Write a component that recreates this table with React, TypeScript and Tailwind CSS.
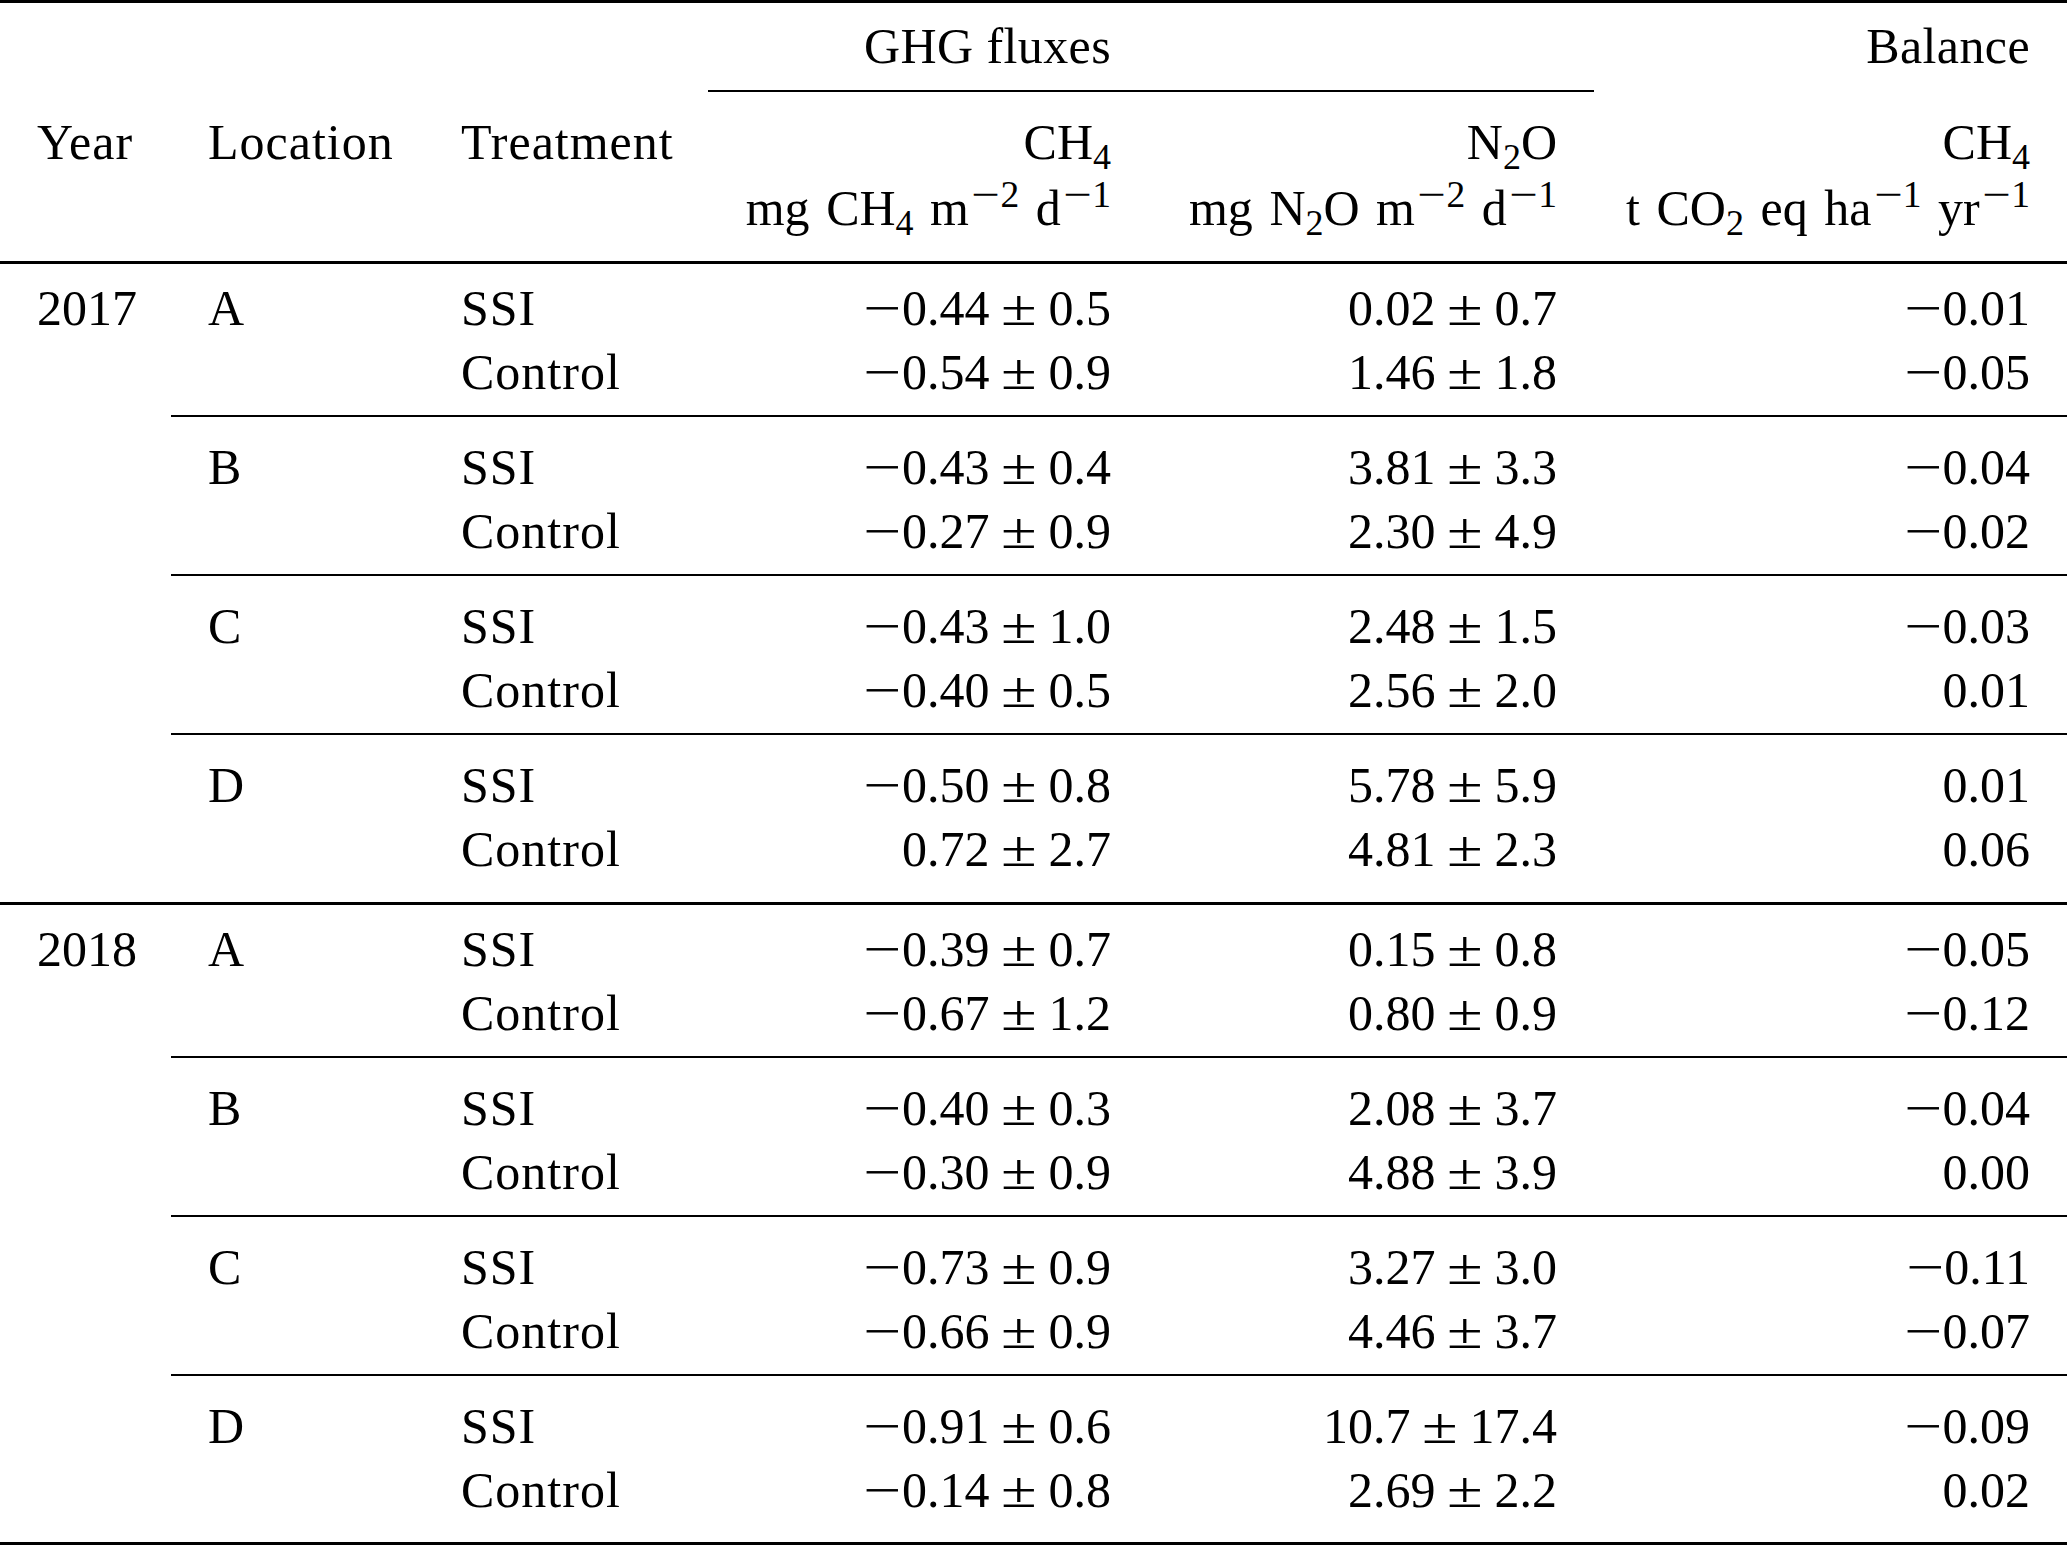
import React from "react";

type Row = { t: string; ch4: [string, string]; n2o: [string, string]; bal: string };
type Group = { loc: string; rows: Row[] };
type Year = { year: string; groups: Group[] };

const data: Year[] = [
  {
    year: "2017",
    groups: [
      {
        loc: "A",
        rows: [
          { t: "SSI", ch4: ["-0.44", "0.5"], n2o: ["0.02", "0.7"], bal: "-0.01" },
          { t: "Control", ch4: ["-0.54", "0.9"], n2o: ["1.46", "1.8"], bal: "-0.05" },
        ],
      },
      {
        loc: "B",
        rows: [
          { t: "SSI", ch4: ["-0.43", "0.4"], n2o: ["3.81", "3.3"], bal: "-0.04" },
          { t: "Control", ch4: ["-0.27", "0.9"], n2o: ["2.30", "4.9"], bal: "-0.02" },
        ],
      },
      {
        loc: "C",
        rows: [
          { t: "SSI", ch4: ["-0.43", "1.0"], n2o: ["2.48", "1.5"], bal: "-0.03" },
          { t: "Control", ch4: ["-0.40", "0.5"], n2o: ["2.56", "2.0"], bal: "0.01" },
        ],
      },
      {
        loc: "D",
        rows: [
          { t: "SSI", ch4: ["-0.50", "0.8"], n2o: ["5.78", "5.9"], bal: "0.01" },
          { t: "Control", ch4: ["0.72", "2.7"], n2o: ["4.81", "2.3"], bal: "0.06" },
        ],
      },
    ],
  },
  {
    year: "2018",
    groups: [
      {
        loc: "A",
        rows: [
          { t: "SSI", ch4: ["-0.39", "0.7"], n2o: ["0.15", "0.8"], bal: "-0.05" },
          { t: "Control", ch4: ["-0.67", "1.2"], n2o: ["0.80", "0.9"], bal: "-0.12" },
        ],
      },
      {
        loc: "B",
        rows: [
          { t: "SSI", ch4: ["-0.40", "0.3"], n2o: ["2.08", "3.7"], bal: "-0.04" },
          { t: "Control", ch4: ["-0.30", "0.9"], n2o: ["4.88", "3.9"], bal: "0.00" },
        ],
      },
      {
        loc: "C",
        rows: [
          { t: "SSI", ch4: ["-0.73", "0.9"], n2o: ["3.27", "3.0"], bal: "-0.11" },
          { t: "Control", ch4: ["-0.66", "0.9"], n2o: ["4.46", "3.7"], bal: "-0.07" },
        ],
      },
      {
        loc: "D",
        rows: [
          { t: "SSI", ch4: ["-0.91", "0.6"], n2o: ["10.7", "17.4"], bal: "-0.09" },
          { t: "Control", ch4: ["-0.14", "0.8"], n2o: ["2.69", "2.2"], bal: "0.02" },
        ],
      },
    ],
  },
];

// math-style minus, wider than the text one
const Minus = () => (
  <span className="inline-block w-[0.78em] text-center">
    <span className="inline-block scale-x-[1.35]">−</span>
  </span>
);

const Num = ({ v }: { v: string }) =>
  v.startsWith("-") ? (
    <>
      <Minus />
      {v.slice(1)}
    </>
  ) : (
    <>{v}</>
  );

const PM = ({ v }: { v: [string, string] }) => (
  <>
    <Num v={v[0]} />
    <span className="mx-[0.2em] inline-block w-[0.78em] text-center">
      <span className="inline-block scale-x-[1.3]">±</span>
    </span>
    {v[1]}
  </>
);

const Sub = ({ children }: { children: React.ReactNode }) => (
  <sub className="bottom-[-0.28em] text-[72%]">{children}</sub>
);
const SupNeg = ({ n }: { n: string }) => (
  <sup className="top-[-0.48em] ml-[0.06em] text-[75%]">
    <Minus />
    {n}
  </sup>
);
// inter-word gap in the unit lines
const Gap = () => <span className="inline-block w-[0.33em]" />;

const GRID6 = "grid grid-cols-[171px_253px_284px_440px_446px_473px]";
const GRID5 = "grid grid-cols-[253px_284px_440px_446px_473px]";

const Header = () => (
  <div className="border-t-[3px] border-b-[3px] border-black">
    <div className={`${GRID6} pt-[11px] leading-[64px] tracking-[0.008em]`}>
      <div className="col-start-4 pr-[37px] text-right">GHG fluxes</div>
      <div className="col-start-6 pr-[37px] text-right">Balance</div>
    </div>
    <div className={`${GRID6} mt-[12px]`}>
      <div className="col-span-2 col-start-4 border-t-2 border-black" />
    </div>
    <div className={`${GRID6} pt-[18px] pb-[21px] leading-[64px]`}>
      <div className="pl-[37px] tracking-[0.02em]">Year</div>
      <div className="pl-[37px] tracking-[0.02em]">Location</div>
      <div className="pl-[37px] tracking-[0.02em]">Treatment</div>
      <div className="pr-[37px] text-right">
        <div>
          CH<Sub>4</Sub>
        </div>
        <div className="mt-[2px] whitespace-nowrap">
          mg<Gap />CH<Sub>4</Sub>
          <Gap />m<SupNeg n="2" />
          <Gap />d<SupNeg n="1" />
        </div>
      </div>
      <div className="pr-[37px] text-right">
        <div>
          N<Sub>2</Sub>O
        </div>
        <div className="mt-[2px] whitespace-nowrap">
          mg<Gap />N<Sub>2</Sub>O<Gap />m<SupNeg n="2" />
          <Gap />d<SupNeg n="1" />
        </div>
      </div>
      <div className="pr-[37px] text-right">
        <div>
          CH<Sub>4</Sub>
        </div>
        <div className="mt-[2px] whitespace-nowrap">
          t<Gap />CO<Sub>2</Sub>
          <Gap />eq<Gap />ha<SupNeg n="1" />
          <Gap />yr<SupNeg n="1" />
        </div>
      </div>
    </div>
  </div>
);

const YearBlock = ({ y, last }: { y: Year; last: boolean }) => (
  <div className={last ? "flex" : "flex border-b-[3px] border-black"}>
    <div className="w-[171px] pl-[37px] pt-[12px] leading-[64px]">{y.year}</div>
    <div className="flex flex-1 flex-col">
      {y.groups.map((g, i) => {
        const first = i === 0;
        const end = i === y.groups.length - 1;
        return (
          <div
            key={g.loc}
            className={`${GRID5} leading-[64px] ${first ? "pt-[12px]" : "border-t-2 border-black pt-[18px]"} ${
              end ? (last ? "pb-[20px]" : "pb-[21px]") : "pb-[11px]"
            }`}
          >
            {g.rows.map((r, j) => (
              <React.Fragment key={r.t}>
                <div className="pl-[37px]">{j === 0 ? g.loc : ""}</div>
                <div className="pl-[37px] tracking-[0.02em]">{r.t}</div>
                <div className="whitespace-nowrap pr-[37px] text-right">
                  <PM v={r.ch4} />
                </div>
                <div className="whitespace-nowrap pr-[37px] text-right">
                  <PM v={r.n2o} />
                </div>
                <div className="whitespace-nowrap pr-[37px] text-right">
                  <Num v={r.bal} />
                </div>
              </React.Fragment>
            ))}
          </div>
        );
      })}
    </div>
  </div>
);

export default function App() {
  return (
    <div className="h-[1545px] w-[2067px] overflow-hidden bg-white font-['Liberation_Serif',serif] text-[50px] text-black">
      <Header />
      {data.map((y, i) => (
        <YearBlock key={y.year} y={y} last={i === data.length - 1} />
      ))}
      <div className="border-t-[3px] border-black" />
    </div>
  );
}
